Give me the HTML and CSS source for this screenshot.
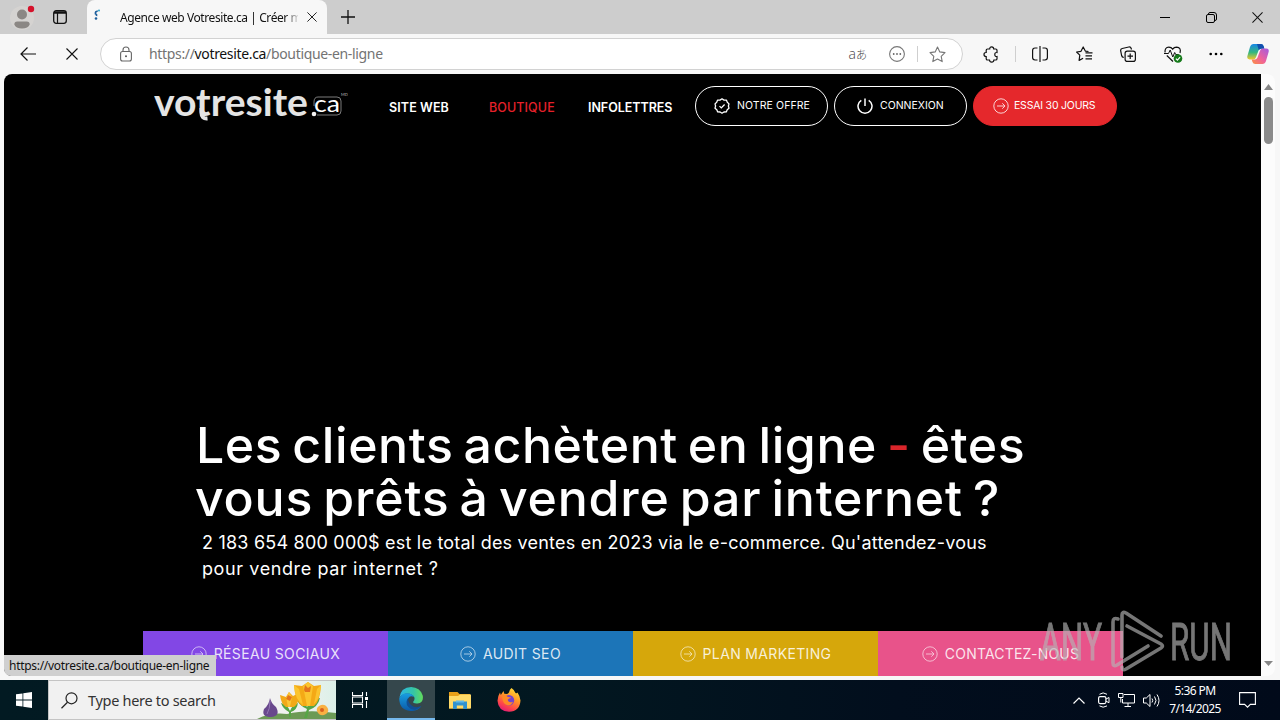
FILE: index.html
```
<!DOCTYPE html>
<html lang="fr">
<head>
    <meta charset="UTF-8">
    <meta name="viewport" content="width=device-width, initial-scale=1.0">
    <title>Agence web Votresite.ca</title>
    <link rel="stylesheet" href="styles.css">
</head>
<body>

    <!-- Shared icons -->
    <svg class="defs" width="0" height="0">
        <symbol id="arrow-circle" viewBox="0 0 16 16">
            <circle cx="8" cy="8" r="7.2" fill="none" stroke="currentColor"/>
            <path d="M4 8h8M9.3 5.3L12 8l-2.7 2.7" fill="none" stroke="currentColor"/>
        </symbol>
        <symbol id="close" viewBox="0 0 12 12">
            <path d="M.5 .5l11 11M11.500 .5l-11 11" fill="none" stroke="currentColor" stroke-width="1.1"/>
        </symbol>
    </svg>

    <!-- Tab strip -->
    <div class="titlebar">
        <div class="profile">
            <svg width="26" height="28" viewBox="0 0 26 28">
                <circle cx="12" cy="15" r="12" fill="#d5d3d1"/>
                <circle cx="12" cy="11.500" r="5" fill="#8b8784"/>
                <path d="M4.300 21.500q0-3 3-3h9.400q3 0 3 3q-1.500 4-7.700 4t-7.700-4z" fill="#8b8784"/>
                <circle cx="21" cy="6" r="3.200" fill="#d5122b"/>
            </svg>
        </div>
        <svg class="workspaces" width="14" height="14" viewBox="0 0 14 14">
            <rect x=".7" y=".7" width="12.600" height="12.600" rx="2.500" fill="none" stroke="#111" stroke-width="1.300"/>
            <path d="M1 2.500h12" stroke="#111" stroke-width="2.500"/>
            <path d="M4.500 3v10" stroke="#111" stroke-width="1.200"/>
        </svg>
        <div class="tab">
            <svg class="favicon" width="8" height="12" viewBox="0 0 8 12">
                <path d="M4.800 2Q2 2.300 2.500 4.800Q4 5.500 3.500 7" fill="none" stroke="#1d5f9c" stroke-width="1.700"/>
                <circle cx="3" cy="9.500" r="1.300" fill="#1d5f9c"/>
                <circle cx="6" cy="1.500" r="1" fill="#2fa3c9"/>
            </svg>
            <span class="tab-title">Agence web Votresite.ca | Créer m</span>
            <svg width="10" height="10"><use href="#close"/></svg>
        </div>
        <svg class="new-tab" width="14" height="14" viewBox="0 0 14 14"><path d="M7 0v14M0 7h14" stroke="#111" stroke-width="1.300"/></svg>
        <div class="window-buttons">
            <svg width="11" height="11" viewBox="0 0 11 11"><path d="M0 5.500h10" stroke="#000"/></svg>
            <svg width="11" height="11" viewBox="0 0 11 11"><path d="M2.500 2.500V2q0-1.500 1.500-1.500h4Q10.500 .5 10.500 3v4q0 1.500-1.500 1.500" fill="none" stroke="#000"/><rect x=".5" y="2.500" width="8" height="8" rx="1.500" fill="none" stroke="#000"/></svg>
            <svg width="11" height="11"><use href="#close"/></svg>
        </div>
    </div>

    <!-- Address bar -->
    <div class="toolbar">
        <svg class="back" width="16" height="14" viewBox="0 0 16 14"><path d="M16 7H1M7.500 .5L1 7l6.500 6.500" fill="none" stroke="#111" stroke-width="1.200"/></svg>
        <svg class="stop" width="12" height="12"><use href="#close"/></svg>
        <div class="address">
            <svg class="lock" width="12" height="16" viewBox="0 0 12 16">
                <rect x=".6" y="5.500" width="10.800" height="9.500" rx="2" fill="none" stroke="#666" stroke-width="1.100"/>
                <path d="M3 5.500V4q0-3 3-3t3 3v1.500" fill="none" stroke="#666" stroke-width="1.100"/>
                <circle cx="6" cy="10.200" r="1" fill="#555"/>
            </svg>
            <span class="url">https://<b>votresite.ca</b>/boutique-en-ligne</span>
            <span class="translate">a<small>あ</small></span>
            <svg class="more-circle" width="16" height="16" viewBox="0 0 16 16">
                <circle cx="8" cy="8" r="7.400" fill="none" stroke="#777" stroke-width="1.100"/>
                <circle cx="4.700" cy="8" r=".9" fill="#666"/><circle cx="8" cy="8" r=".9" fill="#666"/><circle cx="11.300" cy="8" r=".9" fill="#666"/>
            </svg>
            <i class="divider"></i>
            <svg width="17" height="17" viewBox="0 0 17 17"><path d="M8.500 1l2.300 4.900 5.200.7-3.800 3.700 1 5.300-4.700-2.600-4.700 2.600 1-5.300L1 6.600l5.200-.7z" fill="none" stroke="#777" stroke-width="1.100" stroke-linejoin="round"/></svg>
        </div>
        <div class="tools">
            <svg width="17" height="17" viewBox="0 0 17 17"><path d="M4.500 3h2.200q0-2.200 2-2.200t2 2.200h2q1.300 0 1.300 1.300v2.200q-2.200-.2-2.200 2t2.200 2v2.200q0 1.300-1.300 1.300h-1.800q-.2 2.200-2.200 2.200t-2.200-2.200h-2q-1.300 0-1.300-1.300v-2.200Q1 10.500 1 8.500t2.200-2V4.300Q3.200 3 4.500 3z" fill="none" stroke="#111" stroke-width="1.200"/></svg>
            <i class="divider"></i>
            <svg class="split" width="16" height="16" viewBox="0 0 16 16"><path d="M5.500 2H3Q.6 2 .6 4.400v7.200Q.6 14 3 14h2.500M10.500 2H13q2.400 0 2.400 2.400v7.200Q15.400 14 13 14h-2.500" fill="none" stroke="#111" stroke-width="1.200"/><path d="M8 0v16" stroke="#111" stroke-width="1.200"/></svg>
            <svg class="favorites" width="17" height="16" viewBox="0 0 17 16"><path d="M12.500 5.500l-3.200-.4L7.200 1 5 5.300l-4.400.7 3.200 3.200-.7 5.200 4-2.100M9.500 6.800h7M9.500 9.800h6.500M9.500 12.800h6.500" fill="none" stroke="#111" stroke-width="1.200" stroke-linejoin="round"/></svg>
            <svg class="collections" width="16" height="16" viewBox="0 0 16 16"><rect x="5.100" y="5.100" width="10.300" height="10.300" rx="2.200" fill="none" stroke="#111" stroke-width="1.200"/><path d="M10.200 7.500v5.500M7.500 10.200H13M3.800 11.500Q2 11.300 1.600 9.500L.7 4.800Q.4 3 2.200 2.500L8.800 1q1.900-.3 2.400 1.500l.3 1" fill="none" stroke="#111" stroke-width="1.200"/></svg>
            <svg class="essentials" width="19" height="17" viewBox="0 0 19 17"><path d="M1 6.500Q.7 1.200 4.800 1.200 7.300 1.200 8.700 3.200 10 1.200 12.600 1.200 17.500 1.500 16 7M2.800 9.500L9 15.500" fill="none" stroke="#111" stroke-width="1.200"/><path d="M0 7.500h4.500L6.200 4l2.600 7 1.900-4.500 1 2h3" fill="none" stroke="#111"/><circle cx="14" cy="12.500" r="4.300" fill="#167a1b"/><path d="M11.900 12.600l1.500 1.500 2.700-3" fill="none" stroke="#fff" stroke-width="1.200"/></svg>
            <svg class="dots" width="14" height="4" viewBox="0 0 14 4"><circle cx="1.700" cy="2" r="1.300"/><circle cx="7" cy="2" r="1.300"/><circle cx="12.300" cy="2" r="1.300"/></svg>
            <svg class="copilot" width="22" height="20" viewBox="0 0 22 20">
                <defs>
                    <linearGradient id="cp1" x1="0" y1="0" x2="0" y2="1"><stop offset="0" stop-color="#1787e8"/><stop offset=".55" stop-color="#36b77e"/><stop offset="1" stop-color="#f5c82c"/></linearGradient>
                    <linearGradient id="cp2" x1="1" y1="0" x2="0" y2="1"><stop offset="0" stop-color="#a25ae0"/><stop offset=".55" stop-color="#f0629a"/><stop offset="1" stop-color="#fb9140"/></linearGradient>
                </defs>
                <path d="M6.500 0h7.300q2 0 2.700 2l.8 2.600h-3.500q-1.700 0-2.300 1.800L9 13.200q-.7 2.300-3 2.300H2.600Q-.5 15.300.4 12L3 3Q4 0 6.500 0z" fill="url(#cp1)"/>
                <path d="M10 0h4q2 0 2.600 2l.8 2.700h-3.300q-1.500 0-2.300 1.500z" fill="#124fae"/>
                <path d="M15.500 20H8.200q-2 0-2.700-2l-.8-2.600h3.500q1.700 0 2.300-1.800L13 6.800q.7-2.300 3-2.300h3.400q3.100.2 2.200 3.500L19 17q-1 3-3.500 3z" fill="url(#cp2)"/>
            </svg>
        </div>
    </div>

    <!-- Web page -->
    <div class="viewport">
        <main class="page">
            <header class="site-header">
                <svg class="logo" width="194" height="36" viewBox="0 0 194 36">
                    <text class="logo-name" x="0" y="28" textLength="154" lengthAdjust="spacingAndGlyphs">votresite</text>
                    <path d="M47.500 20v5q0 6 6 5.500" fill="none" stroke="#e4e4e4" stroke-width="4"/>
                    <path d="M160 18v-4q0-5 4-5h19q4 0 4 4v10q0 4-4 4h-20" fill="none" stroke="#999" stroke-width=".8"/>
                    <circle cx="160" cy="26" r="2.300" fill="#f2f2f2"/>
                    <text class="logo-ca" x="160" y="24" textLength="26" lengthAdjust="spacingAndGlyphs">ca</text>
                    <text class="logo-mark" x="187" y="8">MD</text>
                </svg>
                <nav class="menu">
                    <a class="m1">SITE WEB</a>
                    <a class="m2 active">BOUTIQUE</a>
                    <a class="m3">INFOLETTRES</a>
                </nav>
                <a class="pill">
                    <svg width="16" height="16" viewBox="0 0 16 16"><path d="M8 .8l2 1.300 2.400 0 .9 2.200 1.700 1.600L14.400 8l.6 2.200-1.800 1.500-.9 2.200-2.400.1L8 15.200 6.100 14l-2.400-.1-.9-2.200L1 10.200 1.600 8 1 5.900l1.700-1.600.9-2.200H6z" fill="none" stroke="#fff" stroke-width="1.300" stroke-linejoin="round"/><path d="M5.500 8.100l1.800 1.800 3.300-3.400" fill="none" stroke="#fff" stroke-width="1.300"/></svg>
                    <span class="p1">NOTRE OFFRE</span>
                </a>
                <a class="pill">
                    <svg width="16" height="16" viewBox="0 0 16 16"><path d="M8 .5V8M4.300 2.300a7 7 0 1 0 7.400 0" fill="none" stroke="#fff" stroke-width="1.500"/></svg>
                    <span class="p2">CONNEXION</span>
                </a>
                <a class="pill trial">
                    <svg width="16" height="16"><use href="#arrow-circle"/></svg>
                    <span class="p3">ESSAI 30 JOURS</span>
                </a>
            </header>

            <section class="hero">
                <h1><span class="h-line1">Les clients achètent en ligne <em>-</em> êtes</span><br><span class="h-line2">vous prêts à vendre par internet ?</span></h1>
                <p><span class="s-line1">2 183 654 800 000$ est le total des ventes en 2023 via le e-commerce. Qu'attendez-vous</span><br><span class="s-line2">pour vendre par internet ?</span></p>
            </section>

            <div class="services">
                <a class="purple"><svg width="16" height="16"><use href="#arrow-circle"/></svg><span>RÉSEAU SOCIAUX</span></a>
                <a class="blue"><svg width="16" height="16"><use href="#arrow-circle"/></svg><span>AUDIT SEO</span></a>
                <a class="yellow"><svg width="16" height="16"><use href="#arrow-circle"/></svg><span>PLAN MARKETING</span></a>
                <a class="pink"><svg width="16" height="16"><use href="#arrow-circle"/></svg><span>CONTACTEZ-NOUS</span></a>
            </div>
        </main>
        <div class="scrollbar">
            <svg width="9" height="6"><path d="M0 6L4.500 0 9 6z" fill="#868686"/></svg>
            <i class="thumb"></i>
            <svg class="down" width="9" height="5"><path d="M0 0h9L4.500 5z" fill="#868686"/></svg>
        </div>
        <div class="status">https://votresite.ca/boutique-en-ligne</div>
        <svg class="watermark" width="194" height="64" viewBox="0 0 194 64">
            <text x="1" y="50" textLength="62" lengthAdjust="spacingAndGlyphs">ANY</text>
            <text x="131" y="50" textLength="62" lengthAdjust="spacingAndGlyphs">RUN</text>
            <g fill="none" stroke="#b5b5b5" stroke-width="3.6" stroke-linejoin="round" stroke-linecap="round">
                <path d="M79 9q-5-2-5 3v41q0 4 4 2l31-19"/>
                <path d="M122 26L87 3q-4-2-4 2v42"/>
                <path d="M88 16l34 18q3 2 0 4L87 59q-4 2-4-2"/>
            </g>
        </svg>
    </div>

    <!-- Windows taskbar -->
    <div class="taskbar">
        <div class="start">
            <svg width="16" height="16" viewBox="0 0 16 16"><path d="M0 2.300L6.500 1.400v6.200H0zM7.300 1.300L16 0v7.600H7.300zM0 8.400h6.500v6.200L0 13.700zM7.300 8.400H16V16l-8.700-1.300z" fill="#fff"/></svg>
        </div>
        <div class="search">
            <svg width="17" height="17" viewBox="0 0 17 17"><circle cx="10.500" cy="6.300" r="5.500" fill="none" stroke="#222" stroke-width="1.200"/><path d="M6.500 10.200L.5 16.200" stroke="#222" stroke-width="1.300"/></svg>
            <span>Type here to search</span>
            <svg class="flowers" width="81" height="38" viewBox="0 0 81 38">
                <defs><linearGradient id="sky" x2="1"><stop offset="0" stop-color="#f1f1f1"/><stop offset="1" stop-color="#dcf0e8"/></linearGradient></defs>
                <rect x="38" width="43" height="38" fill="url(#sky)"/>
                <path d="M2 38q14-7 30-5 20-5 49-1v6z" fill="#6c9a55"/>
                <path d="M34 31q-6-3-8-9 7 2 9 8 2-6 8-8-1 7-7 9v5h-2zM52 28q-9-4-11-11 8 2 11 9 4-8 13-9-2 9-11 12l-2 8h-3z" fill="#55a545"/>
                <path d="M25 14l6 2 3-5 4 4 6-3q0 11-5 14h-8q-5-3-6-12z" fill="#f2a918"/>
                <path d="M31 16l3-5 3 5-2 10h-2z" fill="#fbc635"/>
                <path d="M39 4l8 1 6-4 6 4 7-1q-1 17-7 21H47Q40 20 39 4z" fill="#f4a916"/>
                <path d="M48 5l5-4 5 4-3 20h-3zM39 4l5 4 4 16Q40 19 39 4zM66 4l-4 4-3 15q6-5 7-19z" fill="#fbc42e"/>
                <path d="M49 9l1-5 3 3 3-2-1 6h-5zM31 18l2-4 4 2-2 4z" fill="#e4741b"/>
                <path d="M15 17q1 5 6 9 5 9-5 10-10 0-7-8 5-4 6-11z" fill="#69488d"/>
                <path d="M15 20q0 8-3 13" fill="none" stroke="#9478b5"/>
                <path d="M64 25q5-3 8 1 3 4-1 7-5 3-8-1-3-4 1-7z" fill="#f9b143"/>
                <circle cx="67" cy="29" r="2" fill="#d9601d"/>
            </svg>
        </div>
        <div class="app task-view">
            <svg width="17" height="16" viewBox="0 0 17 16"><path d="M.5 0v3.500h10V0M.5 16v-3.500h10V16M.5 5v6h10V5zM14.500 0v4M14.500 9v7" fill="none" stroke="#fff" stroke-width="1.100"/><rect x="13" y="5" width="3" height="3" fill="#fff"/></svg>
        </div>
        <div class="app current">
            <svg width="24" height="24" viewBox="0 0 24 24">
                <defs>
                    <linearGradient id="eg1" x2="1"><stop offset="0" stop-color="#2bb5e8"/><stop offset=".6" stop-color="#35c5a5"/><stop offset="1" stop-color="#62dc5c"/></linearGradient>
                    <linearGradient id="eg2" x2="0" y2="1"><stop offset="0" stop-color="#179ee2"/><stop offset="1" stop-color="#0c59a6"/></linearGradient>
                </defs>
                <path d="M.3 11Q2 0 12.200 0 21 .3 23.700 8.500 25 15.500 18.500 16.500q-4.800.3-4.300-1.800 2-2 1-4.700Q13 6.500 8.500 6.500 3 6.500.3 11z" fill="url(#eg1)"/>
                <path d="M.2 11.500Q2.500 6.300 8.300 6.300q5 .2 6.700 3.700-4-2-6 1.500-2 4 1.500 7.500 5 4 11.800.2Q18 24.500 11.300 24 .5 23 .2 11.500z" fill="url(#eg2)"/>
                <path d="M9.300 10.800q-3.600 4.500-.2 9 3.200 3.700 7.900 2.800 3.200-1 5.300-3.500-6 2.600-10.300-1.100-3.500-3.500-2.700-7.200z" fill="#124e92"/>
            </svg>
        </div>
        <div class="app">
            <svg width="22" height="19" viewBox="0 0 22 19">
                <path d="M0 1h8.500l2 2H21v14.500H0z" fill="#e8a019"/>
                <path d="M0 5h9l2-1.500h11v14H0z" fill="#ffda68"/>
                <path d="M4 10.500h14V18h-3.800v-3.500H7.800V18H4z" fill="#2f92d0"/>
                <path d="M7 10.500h8" stroke="#63bae8" stroke-width="2"/>
            </svg>
        </div>
        <div class="app">
            <svg width="24" height="24" viewBox="0 0 24 24">
                <defs><linearGradient id="ff" x1=".8" y1="0" x2=".3" y2="1"><stop offset="0" stop-color="#ffe13a"/><stop offset=".4" stop-color="#ff9a26"/><stop offset=".75" stop-color="#ff4649"/><stop offset="1" stop-color="#e21b77"/></linearGradient></defs>
                <path d="M14.500 0q3 2 4 5 1.500.6 2-.5 2.500 3.500 3 8-.7 11-11.500 11.300Q1.200 23.500.5 12.800.7 8 3 4.500l.8 2.500L6.500 3l.8 2.800 2.800.3q2-.7 2.200-2.600.2-2 2.200-3.500z" fill="url(#ff)"/>
                <circle cx="12" cy="12.300" r="5.200" fill="#7243cf"/>
                <path d="M5 8q3-2 6 1 3 .2 3 1-3 .3-3.300 2 1 3.300 5.300 1.700-1.300 3.700-5 3.700Q5.500 16.500 5 8z" fill="#ff8a25"/>
            </svg>
        </div>
        <div class="tray">
            <svg class="caret" width="12" height="7" viewBox="0 0 12 7"><path d="M.5 6.500L6 1l5.500 5.500" fill="none" stroke="#fff" stroke-width="1.200"/></svg>
            <svg width="12" height="16" viewBox="0 0 12 16"><rect x=".6" y="4.600" width="7.300" height="7" rx="1.500" fill="none" stroke="#fff" stroke-width="1.200"/><path d="M8 7l3-1.500v5.200L8 9.200M1.500 2.300Q5-.5 9 2.300M1.500 13.900Q5 16.500 9 13.900" fill="none" stroke="#fff"/></svg>
            <svg width="17" height="14" viewBox="0 0 17 14"><path d="M6 1.500h10.500v8.500H4.500V6M10 10v3M6.500 13.500H13M.5.500h4.500v4H.5zM2.800 4.500v5" fill="none" stroke="#fff"/></svg>
            <svg width="17" height="15" viewBox="0 0 17 15"><path d="M.5 5v5h2.800L7 13.500v-12L3.300 5zM9 5.500q1.500 2 0 4M11.500 3.500q3 4 0 8M14 1.500q4 6 0 12" fill="none" stroke="#fff"/></svg>
            <div class="clock"><span class="time">5:36 PM</span><span class="date">7/14/2025</span></div>
            <svg class="notif" width="17" height="16" viewBox="0 0 17 16"><path d="M.6.6h15.800v11.800h-5L8.500 15.200l-2.900-2.800h-5z" fill="none" stroke="#fff" stroke-width="1.100"/></svg>
        </div>
    </div>

</body>
</html>
```
FILE: styles.css
```
* {
    box-sizing: border-box;
}
body {
    margin: 0;
    width: 1280px;
    height: 720px;
    overflow: hidden;
    display: flex;
    flex-direction: column;
    background-color: #f7f7f7;
    font-family: "Noto Sans", sans-serif;
    color: #111;
}
svg {
    display: block;
    flex-shrink: 0;
}
.defs {
    position: absolute;
}

/* Tab strip */
.titlebar {
    height: 34px;
    flex-shrink: 0;
    display: flex;
    align-items: center;
    background-color: #cdcdcd;
}
.profile {
    width: 43px;
    padding-left: 10px;
}
.workspaces {
    margin-left: 10px;
}
.tab {
    width: 240px;
    height: 34px;
    margin-left: 20px;
    padding-left: 6px;
    display: flex;
    align-items: center;
    background-color: #f7f7f7;
    border-radius: 8px 8px 0 0;
}
.favicon {
    margin-bottom: 4px;
}
.tab-title {
    width: 178px;
    margin-left: 19px;
    margin-right: 9px;
    overflow: hidden;
    white-space: nowrap;
    font-size: 12px;
    letter-spacing: -0.42px;
    -webkit-mask-image: linear-gradient(to right, #000 165px, transparent 180px);
    mask-image: linear-gradient(to right, #000 165px, transparent 180px);
}
.new-tab {
    margin-left: 14px;
}
.window-buttons {
    margin-left: auto;
    margin-right: 17px;
    display: flex;
    gap: 35px;
}

/* Address bar */
.toolbar {
    height: 40px;
    flex-shrink: 0;
    display: flex;
    align-items: center;
}
.back {
    margin-left: 20px;
}
.stop {
    margin-left: 30px;
}
.address {
    width: 863px;
    height: 32px;
    margin-left: 22px;
    padding: 0 16px 0 19px;
    display: flex;
    align-items: center;
    background-color: #fff;
    border: 1px solid #d2d2d2;
    border-radius: 16px;
}
.url {
    margin-left: 17px;
    padding-bottom: 1px;
    font-size: 14px;
    letter-spacing: -0.34px;
    color: #737373;
}
.url b {
    font-weight: normal;
    color: #111;
}
.translate {
    margin-left: auto;
    padding-bottom: 2px;
    font: 300 14px "Open Sans", "Noto Sans CJK JP", sans-serif;
    color: #444;
}
.translate small {
    font-size: 11px;
}
.more-circle {
    margin-left: 22px;
}
.divider {
    width: 1px;
    height: 16px;
    background-color: #cfcfcf;
}
.address .divider {
    margin: 0 11px 0 12px;
}
.tools {
    display: flex;
    align-items: center;
    margin-left: 20px;
}
.tools .divider {
    margin-left: 15px;
}
.split {
    margin-left: 16px;
}
.favorites {
    margin-left: 28px;
}
.collections {
    margin-left: 27px;
}
.essentials {
    margin-left: 28px;
}
.dots {
    margin-left: 26px;
}
.copilot {
    margin-left: 24px;
}

/* Web page */
.viewport {
    position: relative;
    height: 606px;
    flex-shrink: 0;
    display: flex;
    padding: 0 4px 4px;
}
.page {
    width: 1257px;
    height: 602px;
    display: flex;
    flex-direction: column;
    background-color: #000;
    border-radius: 8px 0 0 8px;
    overflow: hidden;
    color: #fff;
    font-family: Inter, sans-serif;
}
.site-header {
    height: 64px;
    padding-left: 150px;
    display: flex;
    align-items: center;
}
.logo-name {
    font: 700 38px Lato, sans-serif;
    fill: #e4e4e4;
}
.logo-ca {
    font: 24px Lato, sans-serif;
    fill: #fff;
}
.logo-mark {
    font: 4px Lato, sans-serif;
    fill: #bbb;
}
.menu {
    display: flex;
    width: 347px;
    padding: 2px 0 0 41px;
    font-size: 12.5px;
    font-weight: 600;
    white-space: nowrap;
}
.m1 {
    width: 100px;
    letter-spacing: 0.1px;
}
.m2 {
    width: 99px;
    letter-spacing: 0.1px;
}
.m3 {
    letter-spacing: -0.05px;
}
.menu .active {
    color: #e5202a;
    font-weight: 500;
}
.pill {
    width: 133px;
    height: 40px;
    margin-right: 6px;
    padding: 0 0 1px 18px;
    display: flex;
    align-items: center;
    gap: 7px;
    border: 1px solid #fff;
    border-radius: 20px;
    font-size: 10.5px;
    white-space: nowrap;
}
.pill + .pill {
    padding-left: 22px;
}
.pill.trial {
    width: 144px;
    padding-left: 19px;
    gap: 5px;
    background-color: #e5282c;
    border-color: #e5282c;
}
.pill.trial svg {
    opacity: 0.8;
}
.p1 {
    letter-spacing: 0.1px;
}
.p3 {
    letter-spacing: -0.2px;
}
.hero {
    height: 493px;
    padding: 281px 0 0 192px;
    white-space: nowrap;
}
h1 {
    margin: 0;
    font-size: 50px;
    font-weight: 500;
    line-height: 53px;
    word-spacing: -4px;
}
h1 em {
    font-style: normal;
    color: #d9252a;
}
.h-line1 {
    letter-spacing: 0.6px;
}
.h-line2 {
    margin-left: -1px;
    letter-spacing: 0.8px;
}
.hero p {
    margin: 5px 0 0 6px;
    font-size: 18px;
    line-height: 26px;
}
.s-line1 {
    letter-spacing: 0.21px;
}
.s-line2 {
    letter-spacing: 0.6px;
}
.services {
    display: flex;
    margin-left: 139px;
}
.services a {
    width: 245px;
    height: 45px;
    display: flex;
    align-items: center;
    justify-content: center;
    gap: 7px;
    font-size: 14px;
    letter-spacing: 0.35px;
    color: rgba(255, 255, 255, 0.85);
}
.services svg {
    opacity: 0.7;
}
.purple {
    background-color: #8247e5;
}
.blue {
    background-color: #1c75b8;
}
.yellow {
    background-color: #d6a70b;
}
.services .pink {
    background-color: #e8538a;
    letter-spacing: 0.2px;
}
.scrollbar {
    width: 14px;
    height: 602px;
    padding: 10px 0;
    display: flex;
    flex-direction: column;
    align-items: center;
    background-color: #fcfcfc;
    border-radius: 0 8px 8px 0;
}
.thumb {
    width: 9px;
    height: 47px;
    margin-top: 7px;
    background-color: #8b8b8b;
    border-radius: 5px;
}
.down {
    margin-top: auto;
}

/* Link preview, over the page */
.status {
    position: absolute;
    left: 4px;
    bottom: 4px;
    width: 212px;
    height: 21px;
    padding-left: 5px;
    font-size: 12px;
    line-height: 21px;
    letter-spacing: -0.29px;
    white-space: nowrap;
    background-color: #cfcfcf;
    border-radius: 0 0 0 7px;
}
.watermark {
    position: absolute;
    right: 47px;
    bottom: 6px;
    opacity: 0.65;
}
.watermark text {
    font: 400 51px Roboto, sans-serif;
    fill: #b5b5b5;
    stroke: #b5b5b5;
    stroke-width: 1;
}

/* Taskbar */
.taskbar {
    height: 40px;
    flex-shrink: 0;
    display: flex;
    background: linear-gradient(to right, #021a22 0%, #021720 45%, #020e1d 70%, #010a1a 100%);
}
.start {
    width: 48px;
    display: flex;
    align-items: center;
    justify-content: center;
}
.search {
    width: 288px;
    display: flex;
    align-items: center;
    padding-left: 12px;
    background-color: #f1f1f1;
    border: 1px solid #c4c4c4;
    border-right: 0;
    font-size: 14.5px;
    letter-spacing: -0.3px;
    color: #333;
}
.search span {
    margin-left: 10px;
    white-space: nowrap;
}
.flowers {
    margin-left: auto;
}
.app {
    width: 48px;
    margin-right: 1px;
    display: flex;
    align-items: center;
    justify-content: center;
}
.task-view {
    margin-right: 3px;
}
.app.current {
    background-color: #35474c;
    border-bottom: 2px solid #76b9ed;
}
.tray {
    margin-left: auto;
    display: flex;
    align-items: center;
    gap: 8px;
    padding-right: 24px;
}
.caret {
    margin-right: 5px;
}
.clock {
    width: 54px;
    display: flex;
    flex-direction: column;
    align-items: center;
    font-size: 12px;
    line-height: 18px;
    letter-spacing: -0.6px;
    color: #fff;
    white-space: nowrap;
}
.notif {
    margin-left: 9px;
}
```
